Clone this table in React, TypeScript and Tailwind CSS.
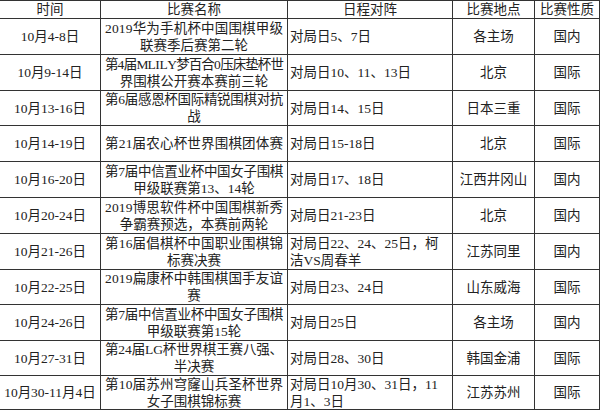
type Row = {
  date: string;
  name: string[];
  schedule: string[];
  place: string;
  kind: string;
};

const rows: Row[] = [
  { date: "10月4-8日", name: ["2019华为手机杯中国围棋甲级", "联赛季后赛第二轮"], schedule: ["对局日5、7日"], place: "各主场", kind: "国内" },
  { date: "10月9-14日", name: ["第4届MLILY梦百合0压床垫杯世", "界围棋公开赛本赛前三轮"], schedule: ["对局日10、11、13日"], place: "北京", kind: "国际" },
  { date: "10月13-16日", name: ["第6届感恩杯国际精锐围棋对抗", "战"], schedule: ["对局日14、15日"], place: "日本三重", kind: "国际" },
  { date: "10月14-19日", name: ["第21届农心杯世界围棋团体赛"], schedule: ["对局日15-18日"], place: "北京", kind: "国际" },
  { date: "10月16-20日", name: ["第7届中信置业杯中国女子围棋", "甲级联赛第13、14轮"], schedule: ["对局日17、18日"], place: "江西井冈山", kind: "国内" },
  { date: "10月20-24日", name: ["2019博思软件杯中国围棋新秀", "争霸赛预选，本赛前两轮"], schedule: ["对局日21-23日"], place: "北京", kind: "国内" },
  { date: "10月21-26日", name: ["第16届倡棋杯中国职业围棋锦", "标赛决赛"], schedule: ["对局日22、24、25日，柯", "洁VS周春羊"], place: "江苏同里", kind: "国内" },
  { date: "10月22-25日", name: ["2019扁康杯中韩围棋国手友谊", "赛"], schedule: ["对局日23、24日"], place: "山东威海", kind: "国际" },
  { date: "10月24-26日", name: ["第7届中信置业杯中国女子围棋", "甲级联赛第15轮"], schedule: ["对局日25日"], place: "各主场", kind: "国内" },
  { date: "10月27-31日", name: ["第24届LG杯世界棋王赛八强、", "半决赛"], schedule: ["对局日28、30日"], place: "韩国金浦", kind: "国际" },
  { date: "10月30-11月4日", name: ["第10届苏州穹窿山兵圣杯世界", "女子围棋锦标赛"], schedule: ["对局日10月30、31日，11", "月1、3日"], place: "江苏苏州", kind: "国际" },
];

const cell = "flex items-center border-b border-r border-[#333] leading-[17px]";

// spreads the characters of a line across the full cell width
function DistributedLine({ text }: { text: string }) {
  return (
    <span className="flex w-full justify-between">
      {Array.from(text).map((char, index) => (
        <span key={index} className="min-w-0 whitespace-pre">
          {char}
        </span>
      ))}
    </span>
  );
}

export default function App() {
  return (
    <div
      className="grid h-[410px] w-[600px] grid-cols-[101px_187px_165px_82px_65px] grid-rows-[18px_36px_36px_35px_36px_36px_36px_36px_35px_36px_35px_34px] overflow-hidden border-t border-[#333] bg-white text-[13.5px] text-[#222]"
      style={{ fontFamily: '"Liberation Serif", "Noto Sans CJK SC", serif' }}
    >
      <div className={`${cell} justify-center`}>时间</div>
      <div className={`${cell} justify-center`}>比赛名称</div>
      <div className={`${cell} justify-center`}>日程对阵</div>
      <div className={`${cell} justify-center`}>比赛地点</div>
      <div className={`${cell} justify-center`}>比赛性质</div>

      {rows.map((row) => (
        <div key={row.date} className="contents">
          <div className={`${cell} justify-center whitespace-nowrap`}>{row.date}</div>
          <div className={`${cell} flex-col justify-center px-[4px]`}>
            {row.name.map((line, index) =>
              index < row.name.length - 1 || row.name.length === 1 ? (
                <DistributedLine key={line} text={line} />
              ) : (
                <span key={line} className="block w-full whitespace-nowrap text-center">
                  {line}
                </span>
              ),
            )}
          </div>
          <div className={`${cell} flex-col items-start justify-center pl-[2px]`}>
            {row.schedule.map((line) => (
              <span key={line} className="block whitespace-nowrap">
                {line}
              </span>
            ))}
          </div>
          <div className={`${cell} justify-center`}>{row.place}</div>
          <div className={`${cell} justify-center`}>{row.kind}</div>
        </div>
      ))}
    </div>
  );
}
